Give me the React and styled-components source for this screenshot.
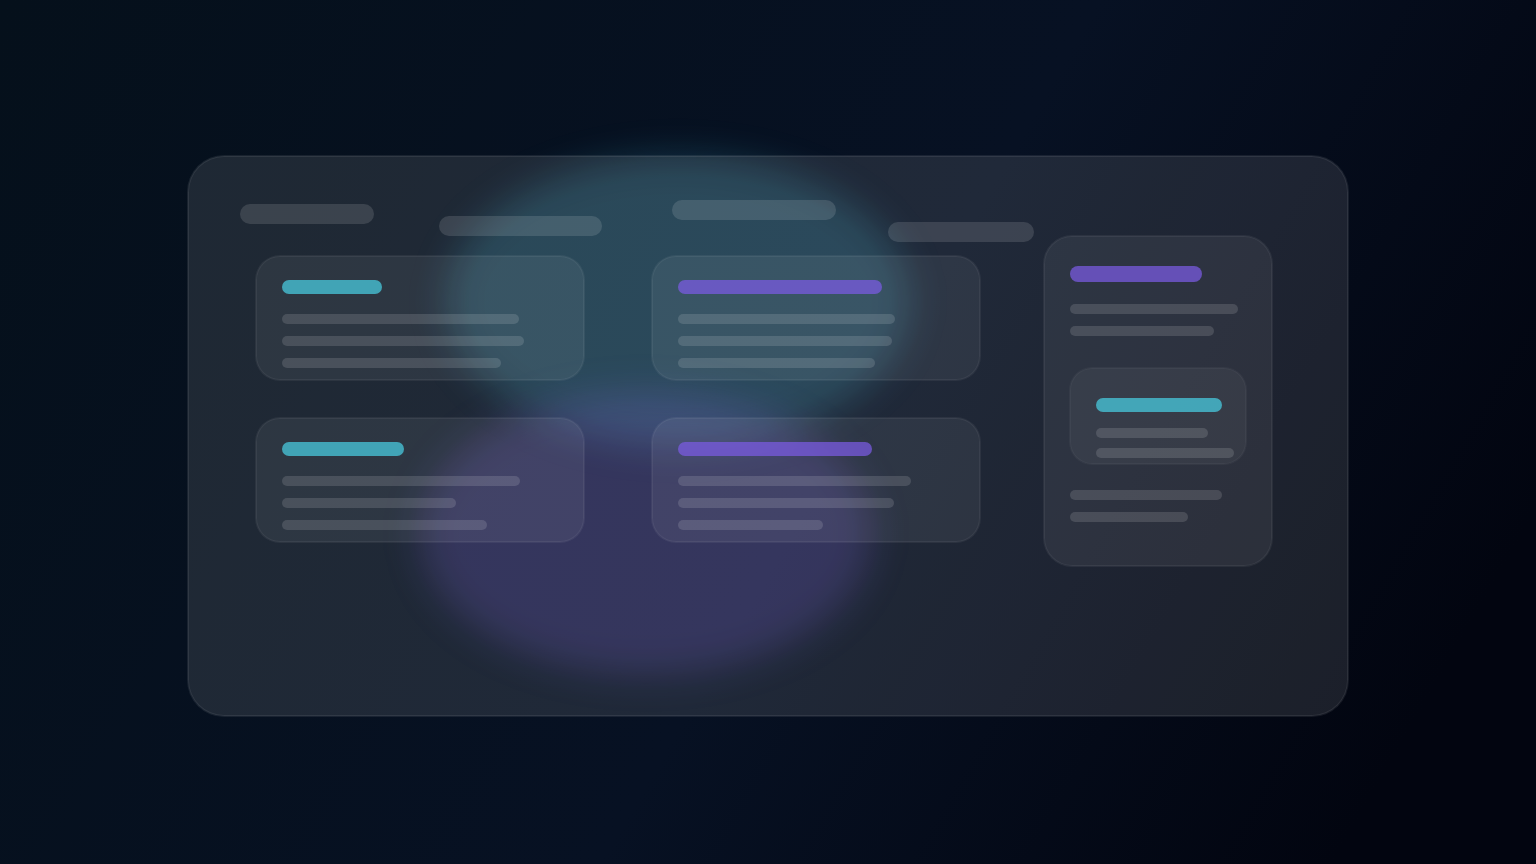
import React from "react";
import styled, { createGlobalStyle } from "styled-components";

const GlobalStyle = createGlobalStyle`
  * { box-sizing: border-box; }
  body {
    margin: 0;
    background: #030712;
    font-family: "Inter", "Liberation Sans", sans-serif;
  }
`;

const tones = {
  cyan: "rgba(72, 202, 222, 0.75)",
  violet: "rgba(124, 92, 228, 0.72)",
};

// A hairline that straddles the edge of a glass surface.
const edge = (alpha) =>
  `inset 0 0 0 1px rgba(255, 255, 255, ${alpha}), 0 0 0 1px rgba(255, 255, 255, ${alpha})`;

const Page = styled.main`
  display: flex;
  justify-content: center;
  align-items: center;
  min-height: 100vh;
  padding: 156px 48px 148px;
  overflow: hidden;
  background: linear-gradient(120deg, #05101b 0%, #071123 54%, #020510 90%);
`;

const Stage = styled.div`
  position: relative;
  width: 100%;
  max-width: 1160px;
`;

const Glow = styled.div`
  position: absolute;
  top: ${(p) => p.$top}px;
  left: ${(p) => p.$left}px;
  width: ${(p) => p.$width}px;
  height: ${(p) => p.$height}px;
  border-radius: 50%;
  background: ${(p) => p.$color};
  filter: blur(18px);
`;

const Panel = styled.section`
  position: relative;
  display: flex;
  align-items: flex-start;
  gap: 10px;
  min-height: 560px;
  padding: 44px 76px 44px 52px;
  border-radius: 36px;
  background: rgba(255, 255, 255, 0.1);
  box-shadow: ${edge(0.08)};
`;

const Content = styled.div`
  flex: 1;
  min-width: 0;
`;

const Tabs = styled.header`
  display: grid;
  grid-template-columns: 199fr 233fr 216fr 146fr;
  height: 56px;
`;

const Pill = styled.div`
  width: ${(p) => p.$width}px;
  height: 20px;
  margin-top: ${(p) => p.$drop}px;
  border-radius: 10px;
  background: rgba(255, 255, 255, 0.125);
`;

const Cards = styled.div`
  display: grid;
  grid-template-columns: 1fr 1fr;
  gap: 38px 68px;
  margin: 0 54px 0 16px;
`;

const Surface = styled.article`
  background: rgba(255, 255, 255, 0.065);
  box-shadow: ${edge(0.06)};
`;

const Card = styled(Surface)`
  padding: 24px 26px 12px;
  border-radius: 24px;
`;

const Sidebar = styled(Surface).attrs({ as: "aside" })`
  flex: 0 0 228px;
  min-height: 330px;
  margin-top: 36px;
  padding: 30px 26px 44px;
  border-radius: 28px;
`;

const Inset = styled(Surface)`
  margin: 32px 0 26px;
  padding: 30px 12px 6px 26px;
  border-radius: 22px;
  background: rgba(255, 255, 255, 0.05);
  box-shadow: ${edge(0.04)};
`;

const Title = styled.div`
  width: ${(p) => p.$width}px;
  height: ${(p) => p.$height || 14}px;
  border-radius: 8px;
  background: ${(p) => tones[p.$tone]};
`;

const Lines = styled.div`
  display: grid;
  gap: ${(p) => p.$gap || 12}px;
  margin-top: ${(p) => p.$top || 0}px;
`;

const Line = styled.div`
  width: ${(p) => p.$width}px;
  height: 10px;
  border-radius: 5px;
  background: rgba(255, 255, 255, 0.135);
`;

const pills = [
  { width: 134, drop: 4 },
  { width: 163, drop: 16 },
  { width: 164, drop: 0 },
  { width: 146, drop: 22 },
];

const cards = [
  { tone: "cyan", title: 100, lines: [237, 242, 219] },
  { tone: "violet", title: 204, lines: [217, 214, 197] },
  { tone: "cyan", title: 122, lines: [238, 174, 205] },
  { tone: "violet", title: 194, lines: [233, 216, 145] },
];

function TextLines({ widths, gap, top }) {
  return (
    <Lines $gap={gap} $top={top}>
      {widths.map((width) => (
        <Line key={width} $width={width} />
      ))}
    </Lines>
  );
}

export default function App() {
  return (
    <>
      <GlobalStyle />
      <Page>
        <Stage>
          <Glow $left={258} $top={0} $width={464} $height={290} $color="rgba(72, 202, 228, 0.2)" />
          <Glow $left={232} $top={236} $width={452} $height={282} $color="rgba(124, 92, 230, 0.21)" />
          <Panel>
            <Content>
              <Tabs>
                {pills.map((pill) => (
                  <Pill key={pill.drop} $width={pill.width} $drop={pill.drop} />
                ))}
              </Tabs>
              <Cards>
                {cards.map((card) => (
                  <Card key={card.title}>
                    <Title $tone={card.tone} $width={card.title} />
                    <TextLines widths={card.lines} top={20} />
                  </Card>
                ))}
              </Cards>
            </Content>
            <Sidebar>
              <Title $tone="violet" $width={132} $height={16} />
              <TextLines widths={[168, 144]} top={22} />
              <Inset>
                <Title $tone="cyan" $width={126} />
                <TextLines widths={[112, 138]} gap={10} top={16} />
              </Inset>
              <TextLines widths={[152, 118]} />
            </Sidebar>
          </Panel>
        </Stage>
      </Page>
    </>
  );
}
